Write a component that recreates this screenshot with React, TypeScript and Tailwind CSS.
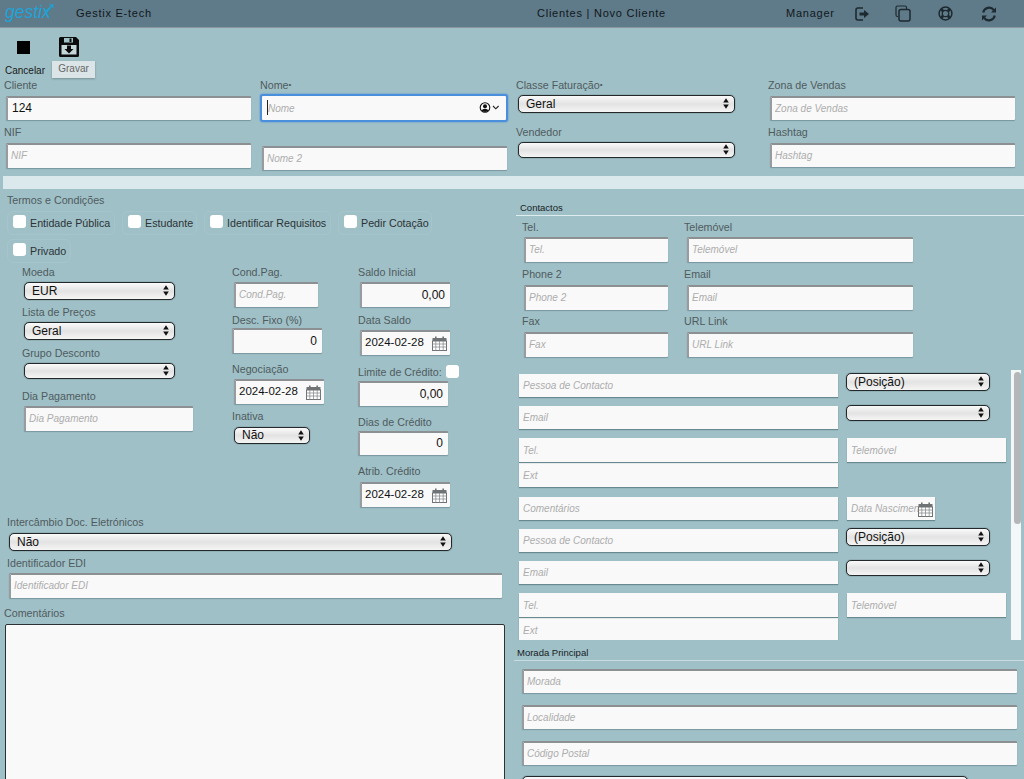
import React from "react";

const inputBase =
  "block bg-[#f9f9f9] border-t-2 border-l-2 border-t-[#8c9093] border-l-[#989c9f] rounded-[1px] shadow-[0_1px_1px_rgba(70,100,110,0.45)] text-[#111] px-[3px] pb-[2px] outline-none placeholder:italic placeholder:text-[#adadad]";

function Label({ children, className = "" }: { children: React.ReactNode; className?: string }) {
  return <div className={`h-[12px] leading-[12px] text-[10.7px] text-[#4f5b60] whitespace-nowrap ${className}`}>{children}</div>;
}

function Field({ placeholder, value, className = "", right }: { placeholder?: string; value?: string; className?: string; right?: boolean }) {
  return (
    <input
      readOnly
      placeholder={placeholder}
      value={value ?? ""}
      className={`${inputBase} ${value ? "text-[12px]" : "text-[10px]"} ${right ? "text-right pr-[5px]" : ""} ${className}`}
    />
  );
}

function Plain({ placeholder, className = "h-[23px]" }: { placeholder: string; className?: string }) {
  return (
    <input
      readOnly
      placeholder={placeholder}
      value=""
      className={`block bg-[#f9f9f9] px-[4px] text-[10px] outline-none shadow-[0_1px_1px_rgba(70,100,110,0.6)] placeholder:italic placeholder:text-[#adadad] ${className}`}
    />
  );
}

function Arrows() {
  return (
    <svg width="6" height="11" viewBox="0 0 6 11" className="shrink-0">
      <path d="M3 0.3L5.8 4.4H0.2Z M3 10.7L0.2 6.6H5.8Z" fill="#111" />
    </svg>
  );
}

function Select({ value, className = "" }: { value?: string; className?: string }) {
  return (
    <div
      className={`flex items-center justify-between bg-linear-to-b from-[#fafafa] via-[#e3e3e3] to-[#f5f5f5] border border-[#23282b] rounded-[5px] shadow-[0_0_1px_#23282b] pl-[7px] pr-[5px] pb-[1px] text-[12px] text-[#111] ${className}`}
    >
      <span>{value}</span>
      <Arrows />
    </div>
  );
}

function Calendar({ className = "" }: { className?: string }) {
  return (
    <svg width="15" height="15" viewBox="0 0 15 15" className={`shrink-0 ${className}`}>
      <rect x="3" y="0.5" width="1.6" height="3" fill="#6f7375" />
      <rect x="10.4" y="0.5" width="1.6" height="3" fill="#6f7375" />
      <rect x="0.5" y="2" width="14" height="3" fill="#6f7375" />
      <rect x="0.5" y="5" width="14" height="9.5" fill="#fff" stroke="#6f7375" />
      <path d="M0.5 8H14.5M0.5 11H14.5M3.8 5V14.5M7.5 5V14.5M11.2 5V14.5" stroke="#8a8e90" strokeWidth="0.8" />
    </svg>
  );
}

function DateField({ value, className = "" }: { value: string; className?: string }) {
  return (
    <div className={`${inputBase} flex items-center justify-between text-[11.5px] pr-[3px] ${className}`}>
      <span>{value}</span>
      <Calendar className="mt-[2px]" />
    </div>
  );
}

function Check({ label, className = "" }: { label: string; className?: string }) {
  return (
    <div className={`flex items-center h-[24px] pl-[5px] border border-[#ffffff14] rounded-[6px] text-[10.7px] text-[#2b3336] whitespace-nowrap ${className}`}>
      <span className="w-[13px] h-[13px] bg-white rounded-[3px] mr-[4px] -mt-[3px] shrink-0" />
      <span className="mt-[1px]">{label}</span>
    </div>
  );
}

function ContactBlock() {
  return (
    <div className="pl-[7px]">
      <div className="flex h-[32px]">
        <Plain placeholder="Pessoa de Contacto" className="w-[319px] h-[23px] mt-[1px]" />
        <Select value="(Posição)" className="w-[144px] h-[18px] ml-[8px]" />
      </div>
      <div className="flex h-[32px]">
        <Plain placeholder="Email" className="w-[319px] h-[23px] mt-[1px]" />
        <Select className="w-[144px] h-[16px] ml-[8px]" />
      </div>
      <div className="flex h-[25px]">
        <Plain placeholder="Tel." className="w-[319px] h-[24px] mt-[1px]" />
        <Plain placeholder="Telemóvel" className="w-[159px] h-[24px] ml-[9px] mt-[1px]" />
      </div>
      <div className="h-[33px]">
        <Plain placeholder="Ext" className="w-[319px] h-[24px] mt-[1px]" />
      </div>
    </div>
  );
}

function HeaderIcons() {
  const cls = "text-[#1d2a30]";
  return (
    <div className="flex items-center">
      <svg width="15" height="14" viewBox="0 0 15 14" className={cls}>
        <path d="M8 1H3a2 2 0 0 0-2 2v8a2 2 0 0 0 2 2h5" fill="none" stroke="currentColor" strokeWidth="1.6" />
        <path d="M4.5 5.5H9V3l5 4-5 4V8.5H4.5Z" fill="currentColor" />
      </svg>
      <svg width="16" height="17" viewBox="0 0 16 17" className={`ml-[25px] ${cls}`}>
        <path d="M3 11.5H2.5A1.5 1.5 0 0 1 1 10V2.5A1.5 1.5 0 0 1 2.5 1H10a1.5 1.5 0 0 1 1.5 1.5V4" fill="none" stroke="currentColor" strokeWidth="1.2" />
        <rect x="4" y="4.5" width="11" height="11.5" rx="2" fill="none" stroke="currentColor" strokeWidth="1.5" />
      </svg>
      <svg width="15" height="15" viewBox="0 0 15 15" className={`ml-[27px] ${cls}`}>
        <circle cx="7.5" cy="7.5" r="6.4" fill="none" stroke="currentColor" strokeWidth="1.5" />
        <circle cx="7.5" cy="7.5" r="3.2" fill="none" stroke="currentColor" strokeWidth="1.3" />
        <path d="M3 3L5.2 5.2M12 3L9.8 5.2M3 12L5.2 9.8M12 12L9.8 9.8" stroke="currentColor" strokeWidth="2.8" />
      </svg>
      <svg width="16" height="16" viewBox="0 0 16 16" className={`ml-[28px] ${cls}`}>
        <path d="M2.2 6.5A6 6 0 0 1 12.8 4" fill="none" stroke="currentColor" strokeWidth="2.1" />
        <path d="M15 1.5v5H10Z" fill="currentColor" />
        <path d="M13.8 9.5A6 6 0 0 1 3.2 12" fill="none" stroke="currentColor" strokeWidth="2.1" />
        <path d="M1 14.5V9.5H6Z" fill="currentColor" />
      </svg>
    </div>
  );
}

export default function App() {
  return (
    <div className="relative w-[1024px] h-[779px] overflow-hidden bg-[#9fc0c6] font-['Liberation_Sans',Arial,sans-serif]">
      {/* Header */}
      <header className="flex items-center h-[28px] bg-[#5f7a88] border-b border-[#89979d] text-[11px] tracking-[0.75px] text-[#10181c]">
        <div className="relative w-[76px] pl-[5px]">
          <span className="italic text-[17.5px] tracking-[0px] text-[#1fa3d8] leading-none">gestix</span>
          <svg width="10" height="9" viewBox="0 0 10 9" className="absolute left-[44px] top-[0px]">
            <path d="M0.5 8.5L8 1.5M5.5 1L9 0.8L8.6 4" fill="none" stroke="#1fa3d8" strokeWidth="1.1" />
          </svg>
        </div>
        <div className="w-[461px]">Gestix E-tech</div>
        <div className="w-[249px]">Clientes | Novo Cliente</div>
        <div className="w-[69px]">Manager</div>
        <HeaderIcons />
      </header>

      {/* Toolbar */}
      <div className="relative flex h-[50px]">
        <div className="w-[52px] flex flex-col items-center">
          <div className="w-[13px] h-[13px] bg-black mt-[13px] -ml-[5px]" />
          <div className="mt-[11px] -ml-[2px] text-[10px] leading-[12px] text-[#1a1a1a]">Cancelar</div>
        </div>
        <svg width="20" height="20" viewBox="0 0 20 20" className="mt-[9px] ml-[7px]">
          <path d="M0 1.5A1.5 1.5 0 0 1 1.5 0H17l3 3v15.5a1.5 1.5 0 0 1-1.5 1.5H1.5A1.5 1.5 0 0 1 0 18.5Z" fill="#0b0b0b" />
          <rect x="5" y="1" width="9" height="4.5" fill="#9fc0c6" />
          <rect x="10.5" y="1.5" width="2" height="3.5" fill="#0b0b0b" />
          <rect x="2.5" y="8" width="15" height="9.5" fill="#c4d6da" />
          <path d="M8 8.5h4v3.5h2.5L10 16.5 5.5 12H8Z" fill="#0b0b0b" />
        </svg>
        <div className="absolute left-[52px] top-[33px] w-[43px] h-[17px] bg-[#dbe5e7] shadow-[0_1px_2px_rgba(0,0,0,0.25)] text-[10px] leading-[16px] text-center text-[#666]">
          Gravar
        </div>
      </div>

      {/* Top form */}
      <div className="flex h-[98px] pt-[1px]">
        <div className="w-[256px]">
          <Label className="ml-[4px]">Cliente</Label>
          <Field value="124" className="w-[245px] h-[24px] ml-[6px] mt-[5px] pl-[4px]" />
          <Label className="ml-[4px] mt-[6px]">NIF</Label>
          <Field placeholder="NIF" className="w-[245px] h-[25px] ml-[6px] mt-[5px]" />
        </div>
        <div className="w-[256px]">
          <Label className="ml-[4px]">Nome<span className="text-[8px] align-top">•</span></Label>
          <div className="relative w-[248px] h-[28px] ml-[4px] mt-[3px]">
            <input
              readOnly
              placeholder="Nome"
              value=""
              className="block w-full h-full bg-[#f9f9f9] border-2 border-[#4a8fdc] rounded-[3px] shadow-[0_0_2px_#4a8fdc] pl-[6px] text-[10px] outline-none placeholder:italic placeholder:text-[#adadad]"
            />
            <span className="absolute left-[7px] top-[6px] w-[1px] h-[15px] bg-[#222]" />
            <svg width="22" height="11" viewBox="0 0 22 11" className="absolute right-[7px] top-[8px]">
              <circle cx="6" cy="5.5" r="4.8" fill="#f9f9f9" stroke="#111" strokeWidth="1.1" />
              <circle cx="6" cy="4.2" r="2" fill="#111" />
              <path d="M2.6 8.6a3.6 2.8 0 0 1 6.8 0A4.8 4.8 0 0 1 2.6 8.6Z" fill="#111" />
              <path d="M14 4l2.8 2.8L19.6 4" fill="none" stroke="#222" strokeWidth="1.1" />
            </svg>
          </div>
          <Field placeholder="Nome 2" className="w-[245px] h-[24px] ml-[6px] mt-[24px]" />
        </div>
        <div className="w-[252px]">
          <Label className="ml-[4px]">Classe Faturação<span className="text-[8px] align-top">•</span></Label>
          <Select value="Geral" className="w-[217px] h-[18px] ml-[6px] mt-[4px]" />
          <Label className="ml-[4px] mt-[13px]">Vendedor</Label>
          <Select className="w-[217px] h-[16px] ml-[6px] mt-[4px]" />
        </div>
        <div className="flex-1">
          <Label className="ml-[4px]">Zona de Vendas</Label>
          <Field placeholder="Zona de Vendas" className="w-[245px] h-[24px] ml-[6px] mt-[5px]" />
          <Label className="ml-[4px] mt-[6px]">Hashtag</Label>
          <Field placeholder="Hashtag" className="w-[245px] h-[24px] ml-[6px] mt-[5px]" />
        </div>
      </div>

      {/* Band */}
      <div className="h-[13px] ml-[3px] bg-[#dbe8ec]" />

      <div className="flex">
        {/* Left column */}
        <div className="w-[512px]">
          <Label className="ml-[7px] mt-[5px]">Termos e Condições</Label>
          <div className="flex flex-wrap ml-[7px] mt-[5px] gap-x-[7px] gap-y-[4px] w-[440px]">
            <Check label="Entidade Pública" className="w-[108px]" />
            <Check label="Estudante" className="w-[75px]" />
            <Check label="Identificar Requisitos" className="w-[127px]" />
            <Check label="Pedir Cotação" className="w-[94px]" />
            <Check label="Privado" className="w-[64px]" />
          </div>

          <div className="flex h-[250px] mt-[3px]">
            <div className="w-[232px] pl-[22px]">
              <Label>Moeda</Label>
              <Select value="EUR" className="w-[151px] h-[18px] ml-[2px] mt-[4px]" />
              <Label className="mt-[6px]">Lista de Preços</Label>
              <Select value="Geral" className="w-[151px] h-[18px] ml-[2px] mt-[4px]" />
              <Label className="mt-[7px]">Grupo Desconto</Label>
              <Select className="w-[151px] h-[16px] ml-[2px] mt-[4px]" />
              <Label className="mt-[11px]">Dia Pagamento</Label>
              <Field placeholder="Dia Pagamento" className="w-[169px] h-[25px] ml-[2px] mt-[4px]" />
            </div>
            <div className="w-[126px]">
              <Label>Cond.Pag.</Label>
              <Field placeholder="Cond.Pag." className="w-[84px] h-[25px] ml-[2px] mt-[4px]" />
              <Label className="mt-[7px]">Desc. Fixo (%)</Label>
              <Field value="0" right className="w-[90px] h-[25px] mt-[2px]" />
              <Label className="mt-[10px]">Negociação</Label>
              <DateField value="2024-02-28" className="w-[90px] h-[25px] ml-[2px] mt-[4px]" />
              <Label className="mt-[6px]">Inativa</Label>
              <Select value="Não" className="w-[76px] h-[17px] ml-[2px] mt-[5px]" />
            </div>
            <div className="flex-1">
              <Label>Saldo Inicial</Label>
              <Field value="0,00" right className="w-[90px] h-[25px] ml-[2px] mt-[4px]" />
              <Label className="mt-[7px]">Data Saldo</Label>
              <DateField value="2024-02-28" className="w-[90px] h-[25px] ml-[2px] mt-[4px]" />
              <div className="flex items-start mt-[10px]">
                <Label className="mt-[1px]">Limite de Crédito:</Label>
                <span className="w-[13px] h-[13px] bg-white rounded-[3px] ml-[4px]" />
              </div>
              <Field value="0,00" right className="w-[90px] h-[25px] mt-[3px]" />
              <Label className="mt-[10px]">Dias de Crédito</Label>
              <Field value="0" right className="w-[90px] h-[24px] mt-[3px]" />
              <Label className="mt-[10px]">Atrib. Crédito</Label>
              <DateField value="2024-02-28" className="w-[90px] h-[25px] ml-[2px] mt-[5px]" />
            </div>
          </div>

          <Label className="ml-[7px]">Intercâmbio Doc. Eletrónicos</Label>
          <Select value="Não" className="w-[443px] h-[18px] ml-[9px] mt-[5px]" />
          <Label className="ml-[7px] mt-[6px]">Identificador EDI</Label>
          <Field placeholder="Identificador EDI" className="w-[493px] h-[25px] ml-[9px] mt-[4px]" />
          <Label className="ml-[4px] mt-[9px]">Comentários</Label>
          <textarea readOnly className="block w-[500px] h-[200px] ml-[5px] mt-[5px] bg-[#f9f9f9] border border-[#2c3134] rounded-[2px] outline-none" />
        </div>

        {/* Right column */}
        <div className="flex-1">
          <div className="ml-[8px] mt-[13px] h-[12px] leading-[12px] text-[9.5px] text-[#161c1f]">Contactos</div>
          <div className="ml-[4px] mt-[1px] h-[1px] bg-[#dfecef]" />
          <div className="grid grid-cols-[162px_1fr] ml-[10px] mt-[5px]">
            <Label>Tel.</Label>
            <Label>Telemóvel</Label>
            <Field placeholder="Tel." className="w-[144px] h-[25px] ml-[2px] mt-[4px]" />
            <Field placeholder="Telemóvel" className="w-[226px] h-[25px] ml-[3px] mt-[4px]" />
            <Label className="mt-[6px]">Phone 2</Label>
            <Label className="mt-[6px]">Email</Label>
            <Field placeholder="Phone 2" className="w-[144px] h-[25px] ml-[2px] mt-[5px]" />
            <Field placeholder="Email" className="w-[226px] h-[25px] ml-[3px] mt-[5px]" />
            <Label className="mt-[5px]">Fax</Label>
            <Label className="mt-[5px]">URL Link</Label>
            <Field placeholder="Fax" className="w-[144px] h-[25px] ml-[2px] mt-[5px]" />
            <Field placeholder="URL Link" className="w-[226px] h-[25px] ml-[3px] mt-[5px]" />
          </div>

          <div className="flex h-[270px] mt-[13px]">
            <div className="w-[499px] h-full pt-[3px] overflow-hidden">
              <ContactBlock />
              <div className="flex h-[32px] pl-[7px]">
                <Plain placeholder="Comentários" className="w-[319px] h-[23px] mt-[1px]" />
                <div className="relative w-[88px] h-[23px] ml-[9px] mt-[1px]">
                  <Plain placeholder="Data Nascimento" className="w-full h-[23px]" />
                  <Calendar className="absolute right-[2px] top-[5px]" />
                </div>
              </div>
              <ContactBlock />
            </div>
            <div className="w-[10px] h-full bg-[#f4f7f7] pl-[3px] pt-[2px]">
              <div className="w-[7px] h-[152px] bg-[#b4b6b7] rounded-[4px]" />
            </div>
          </div>

          <div className="ml-[5px] mt-[7px] h-[12px] leading-[12px] text-[9.5px] text-[#161c1f]">Morada Principal</div>
          <div className="ml-[2px] mt-[1px] h-[1px] bg-[#c8dde1]" />
          <Field placeholder="Morada" className="w-[495px] h-[24px] ml-[10px] mt-[8px]" />
          <Field placeholder="Localidade" className="w-[495px] h-[24px] ml-[10px] mt-[12px]" />
          <Field placeholder="Código Postal" className="w-[495px] h-[24px] ml-[10px] mt-[12px]" />
          <Select className="w-[446px] h-[18px] ml-[10px] mt-[11px]" />
        </div>
      </div>
    </div>
  );
}
